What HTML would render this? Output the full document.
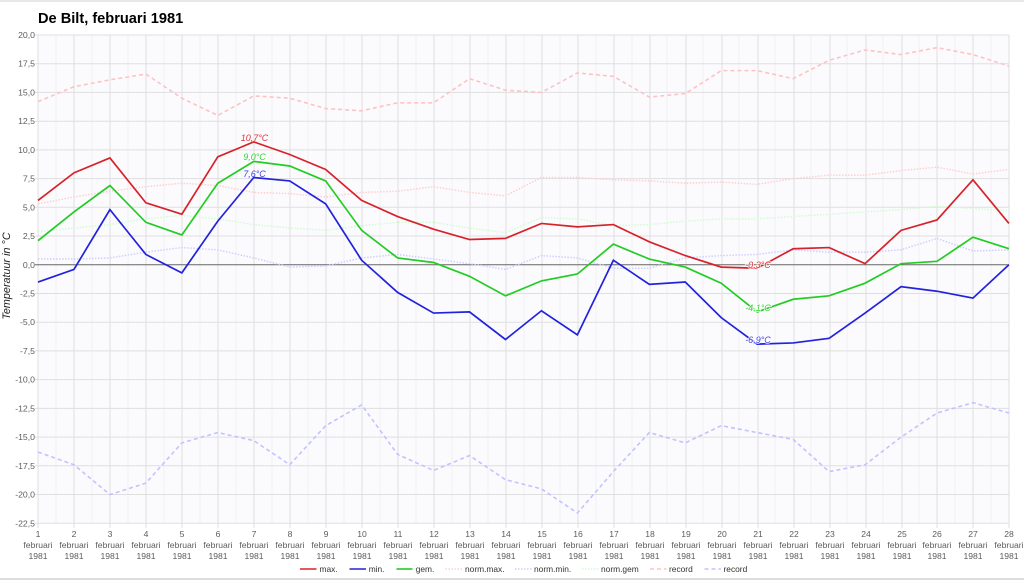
<!DOCTYPE html>
<html>
<head>
<meta charset="utf-8">
<style>
html,body{margin:0;padding:0;background:#fff;width:1024px;height:580px;overflow:hidden}
svg{display:block;filter:blur(0.35px)}
text{font-family:"Liberation Sans",sans-serif}
.y{font-size:8.7px;fill:#5c5c5c;text-anchor:end}
.x{font-size:8.6px;fill:#5c5c5c;text-anchor:middle}
.l{font-size:8.4px;fill:#333}
.d{font-size:9px;font-style:italic;text-anchor:middle}
.s polyline{fill:none;vector-effect:non-scaling-stroke}
</style>
</head>
<body>
<svg width="1024" height="580" viewBox="0 0 1024 580" xmlns="http://www.w3.org/2000/svg">
<rect x="0" y="0" width="1024" height="2" fill="#e8e8e8"/>
<rect x="0" y="578" width="1024" height="2" fill="#dcdcdc"/>
<rect x="38" y="35" width="971" height="488.5" fill="#fbfbfe"/>
<text x="38" y="23" font-size="14.6" font-weight="700" fill="#000">De Bilt, februari 1981</text>

<g stroke="#f1f1f3" stroke-width="1">
<path d="M56 35V523M92 35V523M128 35V523M164 35V523M200 35V523M236 35V523M272 35V523M308 35V523M344 35V523M380 35V523M416 35V523M452 35V523M488 35V523M524 35V523M560 35V523M596 35V523M632 35V523M667 35V523M703 35V523M739 35V523M775 35V523M811 35V523M847 35V523M883 35V523M919 35V523M955 35V523M991 35V523"/>
</g>
<g stroke="#dfdfe0" stroke-width="1">
<path d="M38 35V528M74 35V528M110 35V528M146 35V528M182 35V528M218 35V528M254 35V528M290 35V528M326 35V528M362 35V528M398 35V528M434 35V528M470 35V528M506 35V528M542 35V528M578 35V528M614 35V528M650 35V528M686 35V528M722 35V528M758 35V528M794 35V528M830 35V528M866 35V528M902 35V528M937 35V528M973 35V528M1009 35V528"/>
<path d="M35 35H1009M35 63.7H1009M35 92.4H1009M35 121.2H1009M35 149.9H1009M35 178.6H1009M35 207.3H1009M35 236H1009M35 293.5H1009M35 322.2H1009M35 350.9H1009M35 379.6H1009M35 408.4H1009M35 437.1H1009M35 465.8H1009M35 494.5H1009M35 523.3H1009"/>
</g>
<path d="M35 264.8H1009" stroke="#666" stroke-width="1"/>

<g class="s" transform="translate(2.04,264.8) scale(35.96,11.49)">
<polyline stroke="#ffcfcf" stroke-width="1.5" stroke-dasharray="1.5 1.5" points="1,-5.3 2,-5.9 3,-6.4 4,-6.8 5,-7.1 6,-6.9 7,-6.3 8,-6.2 9,-5.9 10,-6.3 11,-6.4 12,-6.8 13,-6.3 14,-6 15,-7.6 16,-7.6 17,-7.4 18,-7.3 19,-7.1 20,-7.2 21,-7 22,-7.5 23,-7.8 24,-7.8 25,-8.2 26,-8.5 27,-7.9 28,-8.3"/>
<polyline stroke="#cfcfff" stroke-width="1.5" stroke-dasharray="1.5 1.5" points="1,-0.5 2,-0.5 3,-0.6 4,-1.1 5,-1.5 6,-1.3 7,-0.6 8,0.2 9,0.1 10,-0.6 11,-0.9 12,-0.5 13,-0.1 14,0.4 15,-0.8 16,-0.6 17,0.3 18,0.3 19,-0.6 20,-0.8 21,-0.9 22,-1.3 23,-1.1 24,-1.1 25,-1.3 26,-2.3 27,-1.2 28,-1.3"/>
<polyline stroke="#d2fbd2" stroke-width="1.5" stroke-dasharray="1.5 1.5" points="1,-2.9 2,-3.2 3,-3.5 4,-4 5,-4.3 6,-4 7,-3.5 8,-3.2 9,-3 10,-3.4 11,-3.7 12,-3.7 13,-3.2 14,-2.8 15,-4.1 16,-4 17,-3.4 18,-3.5 19,-3.8 20,-4 21,-4 22,-4.2 23,-4.4 24,-4.6 25,-4.8 26,-5.1 27,-4.9 28,-4.7"/>
<polyline stroke="#ffc2c2" stroke-width="1.6" stroke-dasharray="4 3" points="1,-14.2 2,-15.5 3,-16.1 4,-16.6 5,-14.5 6,-13 7,-14.7 8,-14.5 9,-13.6 10,-13.4 11,-14.1 12,-14.1 13,-16.2 14,-15.2 15,-15 16,-16.7 17,-16.4 18,-14.6 19,-14.9 20,-16.9 21,-16.9 22,-16.2 23,-17.8 24,-18.7 25,-18.3 26,-18.9 27,-18.3 28,-17.3"/>
<polyline stroke="#c2c2ff" stroke-width="1.6" stroke-dasharray="4 3" points="1,16.3 2,17.4 3,20 4,19 5,15.5 6,14.6 7,15.3 8,17.4 9,14 10,12.2 11,16.5 12,17.9 13,16.6 14,18.7 15,19.5 16,21.6 17,18 18,14.6 19,15.5 20,14 21,14.6 22,15.2 23,18 24,17.4 25,15 26,12.9 27,12 28,12.9"/>
<polyline stroke="#d8222a" stroke-width="1.7" points="1,-5.6 2,-8 3,-9.3 4,-5.4 5,-4.4 6,-9.4 7,-10.7 8,-9.6 9,-8.3 10,-5.6 11,-4.2 12,-3.1 13,-2.2 14,-2.3 15,-3.6 16,-3.3 17,-3.5 18,-2 19,-0.8 20,0.2 21,0.3 22,-1.4 23,-1.5 24,-0.1 25,-3 26,-3.9 27,-7.4 28,-3.6"/>
<polyline stroke="#22cc22" stroke-width="1.7" points="1,-2.1 2,-4.6 3,-6.9 4,-3.7 5,-2.6 6,-7.1 7,-9 8,-8.6 9,-7.3 10,-3 11,-0.6 12,-0.2 13,1 14,2.7 15,1.4 16,0.8 17,-1.8 18,-0.5 19,0.2 20,1.6 21,4.1 22,3 23,2.7 24,1.6 25,-0.1 26,-0.3 27,-2.4 28,-1.4"/>
<polyline stroke="#2222dd" stroke-width="1.7" points="1,1.5 2,0.4 3,-4.8 4,-0.9 5,0.7 6,-3.8 7,-7.6 8,-7.3 9,-5.3 10,-0.4 11,2.4 12,4.2 13,4.1 14,6.5 15,4 16,6.1 17,-0.4 18,1.7 19,1.5 20,4.6 21,6.9 22,6.8 23,6.4 24,4.2 25,1.9 26,2.3 27,2.9 28,0"/>
</g>

<g class="d">
<text x="254.5" y="141" fill="#e0343c">10,7°C</text>
<text x="254.5" y="160" fill="#3ad43a">9,0°C</text>
<text x="254.5" y="177" fill="#4444e6">7,6°C</text>
<text x="758" y="268" fill="#e0343c" stroke="#fff" stroke-width="2" stroke-opacity=".7" paint-order="stroke">-0,3°C</text>
<text x="758" y="311" fill="#3ad43a" stroke="#fff" stroke-width="2" stroke-opacity=".7" paint-order="stroke">-4,1°C</text>
<text x="758" y="343" fill="#4444e6" stroke="#fff" stroke-width="2" stroke-opacity=".7" paint-order="stroke">-6,9°C</text>
</g>

<g class="y">
<text x="35" y="38">20,0</text>
<text x="35" y="66.7">17,5</text>
<text x="35" y="95.4">15,0</text>
<text x="35" y="124.2">12,5</text>
<text x="35" y="152.9">10,0</text>
<text x="35" y="181.6">7,5</text>
<text x="35" y="210.3">5,0</text>
<text x="35" y="239">2,5</text>
<text x="35" y="267.8">0,0</text>
<text x="35" y="296.5">-2,5</text>
<text x="35" y="325.2">-5,0</text>
<text x="35" y="353.9">-7,5</text>
<text x="35" y="382.6">-10,0</text>
<text x="35" y="411.4">-12,5</text>
<text x="35" y="440.1">-15,0</text>
<text x="35" y="468.8">-17,5</text>
<text x="35" y="497.5">-20,0</text>
<text x="35" y="526.3">-22,5</text>
</g>
<text transform="translate(10,276) rotate(-90)" text-anchor="middle" font-size="10.8" font-style="italic" fill="#222">Temperatuur in °C</text>

<g class="x">
<text x="38" y="537">1</text><text x="38" y="548">februari</text><text x="38" y="559">1981</text>
<text x="74" y="537">2</text><text x="74" y="548">februari</text><text x="74" y="559">1981</text>
<text x="110" y="537">3</text><text x="110" y="548">februari</text><text x="110" y="559">1981</text>
<text x="146" y="537">4</text><text x="146" y="548">februari</text><text x="146" y="559">1981</text>
<text x="182" y="537">5</text><text x="182" y="548">februari</text><text x="182" y="559">1981</text>
<text x="218" y="537">6</text><text x="218" y="548">februari</text><text x="218" y="559">1981</text>
<text x="254" y="537">7</text><text x="254" y="548">februari</text><text x="254" y="559">1981</text>
<text x="290" y="537">8</text><text x="290" y="548">februari</text><text x="290" y="559">1981</text>
<text x="326" y="537">9</text><text x="326" y="548">februari</text><text x="326" y="559">1981</text>
<text x="362" y="537">10</text><text x="362" y="548">februari</text><text x="362" y="559">1981</text>
<text x="398" y="537">11</text><text x="398" y="548">februari</text><text x="398" y="559">1981</text>
<text x="434" y="537">12</text><text x="434" y="548">februari</text><text x="434" y="559">1981</text>
<text x="470" y="537">13</text><text x="470" y="548">februari</text><text x="470" y="559">1981</text>
<text x="506" y="537">14</text><text x="506" y="548">februari</text><text x="506" y="559">1981</text>
<text x="542" y="537">15</text><text x="542" y="548">februari</text><text x="542" y="559">1981</text>
<text x="578" y="537">16</text><text x="578" y="548">februari</text><text x="578" y="559">1981</text>
<text x="614" y="537">17</text><text x="614" y="548">februari</text><text x="614" y="559">1981</text>
<text x="650" y="537">18</text><text x="650" y="548">februari</text><text x="650" y="559">1981</text>
<text x="686" y="537">19</text><text x="686" y="548">februari</text><text x="686" y="559">1981</text>
<text x="722" y="537">20</text><text x="722" y="548">februari</text><text x="722" y="559">1981</text>
<text x="758" y="537">21</text><text x="758" y="548">februari</text><text x="758" y="559">1981</text>
<text x="794" y="537">22</text><text x="794" y="548">februari</text><text x="794" y="559">1981</text>
<text x="830" y="537">23</text><text x="830" y="548">februari</text><text x="830" y="559">1981</text>
<text x="866" y="537">24</text><text x="866" y="548">februari</text><text x="866" y="559">1981</text>
<text x="902" y="537">25</text><text x="902" y="548">februari</text><text x="902" y="559">1981</text>
<text x="937" y="537">26</text><text x="937" y="548">februari</text><text x="937" y="559">1981</text>
<text x="973" y="537">27</text><text x="973" y="548">februari</text><text x="973" y="559">1981</text>
<text x="1009" y="537">28</text><text x="1009" y="548">februari</text><text x="1009" y="559">1981</text>
</g>

<g fill="none" stroke-width="1.6">
<path d="M300 569H316.5" stroke="#d8222a"/>
<path d="M349.5 569H366" stroke="#2222dd"/>
<path d="M396.5 569H412.5" stroke="#22cc22"/>
<path d="M445.5 569H462" stroke="#ffcfcf" stroke-dasharray="1.5 1.5"/>
<path d="M515 569H531.5" stroke="#cfcfff" stroke-dasharray="1.5 1.5"/>
<path d="M582 569H598.5" stroke="#d2fbd2" stroke-dasharray="1.5 1.5"/>
<path d="M650 569H666.5" stroke="#ffc2c2" stroke-dasharray="4 3"/>
<path d="M704.5 569H721" stroke="#c2c2ff" stroke-dasharray="4 3"/>
</g>
<g class="l">
<text x="319.5" y="572">max.</text>
<text x="368.7" y="572">min.</text>
<text x="415.7" y="572">gem.</text>
<text x="465" y="572">norm.max.</text>
<text x="534" y="572">norm.min.</text>
<text x="601" y="572">norm.gem</text>
<text x="669" y="572">record</text>
<text x="723.5" y="572">record</text>
</g>
</svg>
</body>
</html>
